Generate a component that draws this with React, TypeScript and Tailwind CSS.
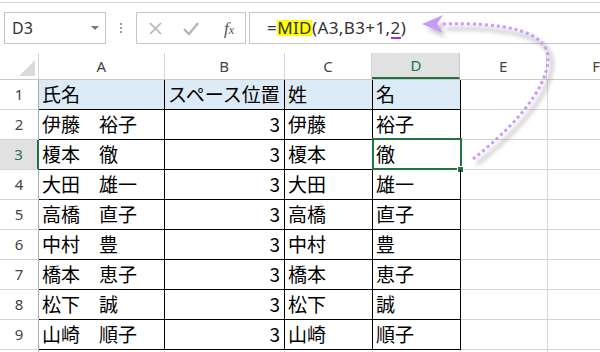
const rows: string[][] = [
  ["氏名", "スペース位置", "姓", "名"],
  ["伊藤　裕子", "3", "伊藤", "裕子"],
  ["榎本　徹", "3", "榎本", "徹"],
  ["大田　雄一", "3", "大田", "雄一"],
  ["高橋　直子", "3", "高橋", "直子"],
  ["中村　豊", "3", "中村", "豊"],
  ["橋本　恵子", "3", "橋本", "恵子"],
  ["松下　誠", "3", "松下", "誠"],
  ["山崎　順子", "3", "山崎", "順子"],
];

const widths = ["w-[126px]", "w-[120px]", "w-[88px]", "w-[88px]"];
const letters = ["A", "B", "C", "D"];

function FormulaBar() {
  return (
    <div className="flex h-[32px] mt-[9px] mb-[9px]">
      <div className="ml-[4px] w-[102px] border border-[#c6c6c6] flex items-center justify-between pl-[7px] pr-[6px]">
        <span className="text-[16px] text-[#333]">D3</span>
        <span className="w-0 h-0 border-l-[4px] border-r-[4px] border-t-[4px] border-l-transparent border-r-transparent border-t-[#777]" />
      </div>
      <div className="w-[30px] flex flex-col items-center justify-center gap-[2px]">
        <span className="w-[2px] h-[2px] bg-[#a0a0a0]" />
        <span className="w-[2px] h-[2px] bg-[#a0a0a0]" />
        <span className="w-[2px] h-[2px] bg-[#a0a0a0]" />
      </div>
      <div className="w-[110px] border border-[#c6c6c6] flex items-center">
        <svg width="80" height="30" viewBox="0 0 80 30">
          <path d="M13 10 L24 21 M24 10 L13 21" stroke="#b4b4b4" strokeWidth="1.6" />
          <path d="M47 16 L52 21 L61 10" stroke="#b4b4b4" strokeWidth="2.2" fill="none" />
        </svg>
        <span className="ml-[7px] text-[17px] italic text-[#555] font-['Liberation_Serif',serif] leading-none">
          f<span className="text-[12px]">x</span>
        </span>
      </div>
      <div className="ml-[3px] flex-1 border-y border-l border-[#c6c6c6] flex items-center pl-[17px] text-[17px] tracking-[0.4px] text-[#333]">
        <span>=</span>
        <span className="bg-[#ffff00] leading-[16px]">MID</span>
        <span>(A3,B3+1,</span>
        <span className="border-b-2 border-[#9b2cf0] leading-[19px]">2</span>
        <span>)</span>
      </div>
    </div>
  );
}

function HeaderRow() {
  return (
    <div className="flex h-[27px] border-b border-[#c8c8c8]">
      <div className="w-[39px] border-r border-[#d4d4d4] relative">
        <div
          className="absolute right-[3px] bottom-[3px] w-0 h-0"
          style={{ borderBottom: "16px solid #dadada", borderLeft: "16px solid transparent" }}
        />
      </div>
      {letters.map((l, i) => (
        <div
          key={l}
          className={`${widths[i]} flex items-center justify-center border-r ${
            l === "D"
              ? "bg-[#e1e1e1] border-[#c8c8c8] text-[#217346] border-b-2 border-b-[#217346]"
              : "border-[#d4d4d4] text-[#444]"
          }`}
        >
          {l}
        </div>
      ))}
      <div className="w-[87px] flex items-center justify-center border-r border-[#d4d4d4] text-[#444]">E</div>
      <div className="flex-1 flex items-center pl-[45px] text-[#444]">F</div>
    </div>
  );
}

function Row({ n, cells }: { n: number; cells: string[] }) {
  const sel = n === 3;
  return (
    <div className="flex h-[30px]">
      <div
        className={`w-[39px] flex items-center justify-center border-b border-b-[#d4d4d4] text-[15px] ${
          sel ? "bg-[#e1e1e1] border-r-2 border-r-[#217346] text-[#217346]" : "border-r border-r-[#ababab] text-[#444]"
        }`}
      >
        {n}
      </div>
      {cells.map((c, i) => (
        <div
          key={i}
          className={`${widths[i]} relative flex items-center border-r border-b border-black text-[19px] text-black font-['Noto_Sans_CJK_JP',sans-serif] ${
            n === 1 ? "bg-[#ddebf7]" : ""
          } ${i === 1 && n > 1 ? "justify-end pr-[4px]" : "pl-[3px]"}`}
        >
          {c}
          {sel && i === 3 && (
            <>
              <div className="absolute -left-[1px] -top-[2px] w-[90px] h-[32px] border-2 border-[#217346]" />
              <div className="absolute -right-[4px] -bottom-[4px] w-[7px] h-[7px] bg-[#217346] border border-white" />
            </>
          )}
        </div>
      ))}
      <div className="w-[87px] border-r border-b border-[#d4d4d4]" />
      <div className="flex-1 border-b border-[#d4d4d4]" />
    </div>
  );
}

function Arrow() {
  const d = "M473 159 C510 130 548 90 548 58 C548 30 500 22 442 24";
  return (
    <svg className="absolute left-0 top-0 pointer-events-none" width="600" height="352" viewBox="0 0 600 352">
      <defs>
        <filter id="blur" x="-20%" y="-20%" width="140%" height="140%">
          <feGaussianBlur stdDeviation="2" />
        </filter>
      </defs>
      <g transform="translate(4 5)" filter="url(#blur)" opacity="0.45">
        <path d={d} stroke="#777" strokeWidth="3" fill="none" />
        <polygon points="423,24 441,17 437,24 441,32" fill="#777" />
      </g>
      <path d={d} stroke="#cc99ff" strokeWidth="3" strokeDasharray="3 3" fill="none" />
      <polygon points="422,24 443,15 437,24 443,33" fill="#c59cf7" />
    </svg>
  );
}

export default function App() {
  return (
    <div className="relative w-[600px] h-[352px] overflow-hidden bg-white font-['Noto_Sans','Noto_Sans_CJK_JP',sans-serif] text-[15px]">
      <div className="h-[3px] border-b border-[#d4d4d4]" />
      <FormulaBar />
      <HeaderRow />
      {rows.map((r, i) => (
        <Row key={i} n={i + 1} cells={r} />
      ))}
      <div className="flex h-[30px]">
        <div className="w-[39px] border-r border-[#ababab]" />
        <div className="w-[126px] border-r border-[#d4d4d4]" />
        <div className="w-[120px] border-r border-[#d4d4d4]" />
        <div className="w-[88px] border-r border-[#d4d4d4]" />
        <div className="w-[88px] border-r border-[#d4d4d4]" />
        <div className="w-[87px] border-r border-[#d4d4d4]" />
      </div>
      <Arrow />
    </div>
  );
}
